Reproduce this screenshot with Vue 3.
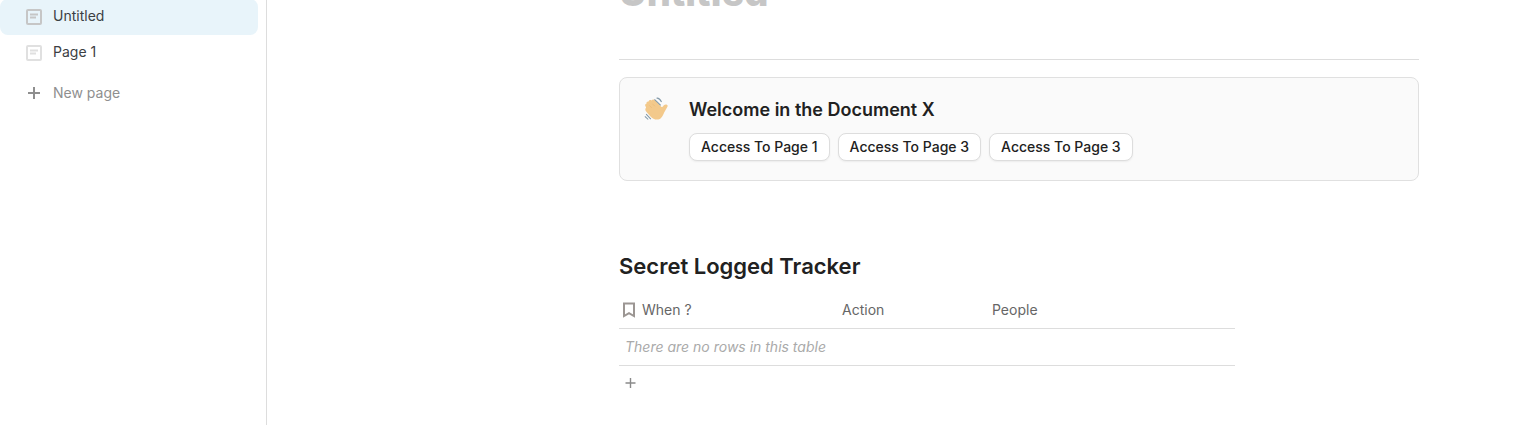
<script setup>
const pages = [
  { name: 'Untitled', active: true },
  { name: 'Page 1', active: false },
]
const links = ['Access To Page 1', 'Access To Page 3', 'Access To Page 3']
</script>

<template>
  <div class="app">
    <nav class="sidebar" aria-label="Pages">
      <a v-for="page in pages" :key="page.name" href="#" class="page" :class="{ active: page.active }">
        <svg class="page-icon" viewBox="0 0 16 16" fill="none" stroke="currentColor" stroke-width="2" aria-hidden="true">
          <rect x="1" y="1" width="14" height="14" rx="1" />
          <path d="M4 5.500h8M4 8.500h6" stroke-width="2" />
        </svg>
        <span class="page-name">{{ page.name }}</span>
      </a>
      <button type="button" class="new-page">
        <svg class="page-icon" viewBox="0 0 16 16" stroke="currentColor" stroke-width="2" aria-hidden="true">
          <path d="M8 2v12M2 8h12" />
        </svg>
        <span>New page</span>
      </button>
    </nav>

    <main class="content">
      <h1 class="title">Untitled</h1>
      <hr class="divider" />

      <section class="callout">
        <svg class="wave" viewBox="0 0 24 24" aria-hidden="true">
          <path
            fill="#f3c98b"
            d="M2.2 8.5C1.7 7.400 2.300 6.500 3.300 6.400C3.100 5 4.300 4.200 5.300 4.500C5.500 3.200 6.900 2.500 8 3.300C9.300 1.900 10.500 2 11.800 3.300L17.500 9.400C18.400 9.800 18.800 9.600 19.300 8.900C20 7.700 21 6.900 22.500 7.200C23.800 7.600 24 8.800 23.300 9.700L20.600 14.300C19.500 17 17.600 21.300 14.500 21.600C11.500 21.900 9.200 20.800 7 18.400L3.200 14.200C1.800 12.500 2 11 3 10.400Z"
          />
          <path fill="none" stroke="#e9b873" stroke-width=".6" d="M6 8l2.500 2.500M9 6.500l2.500 2.500" />
          <path
            fill="none"
            stroke="#8198a8"
            stroke-width="1"
            d="M11 2.200L17 8M13 1.200Q15.500 .4 17.800 4.800M3 16.500L7.500 21.200M1.800 18.500L5 21.600"
          />
        </svg>
        <div class="callout-body">
          <h2 class="callout-title">Welcome in the Document X</h2>
          <div class="actions">
            <button v-for="(label, i) in links" :key="i" type="button" class="action">{{ label }}</button>
          </div>
        </div>
      </section>

      <h2 class="tracker-title">Secret Logged Tracker</h2>
      <table class="tracker">
        <colgroup>
          <col class="col-when" />
          <col class="col-action" />
          <col />
        </colgroup>
        <thead>
          <tr>
            <th scope="col">
              <span class="key">
                <svg class="bookmark" viewBox="0 0 14 16" fill="none" stroke="currentColor" stroke-width="2" aria-hidden="true">
                  <path d="M2 1.500h10v12.500L7 11.200l-5 2.800z" />
                </svg>
                When ?
              </span>
            </th>
            <th scope="col">Action</th>
            <th scope="col">People</th>
          </tr>
        </thead>
        <tbody>
          <tr>
            <td colspan="3">There are no rows in this table</td>
          </tr>
        </tbody>
      </table>
      <button type="button" class="add-row" aria-label="Add row">
        <svg viewBox="0 0 12 12" stroke="currentColor" stroke-width="1.4" aria-hidden="true">
          <path d="M6.500 1v10M1.500 6h10" />
        </svg>
      </button>
    </main>
  </div>
</template>

<style>
body {
  margin: 0;
  background: #fff;
}
</style>

<style scoped>
.app {
  display: flex;
  min-height: 100vh;
  overflow: hidden;
  font-family: Inter, "Liberation Sans", sans-serif;
  font-size: 14px;
  line-height: 20px;
  color: #212121;
}

button {
  font: inherit;
  cursor: pointer;
}

.sidebar {
  box-sizing: border-box;
  flex: 0 0 267px;
  padding-right: 8px;
  border-right: 1px solid #ddd;
}

.page,
.new-page {
  display: flex;
  align-items: center;
  gap: 11px;
  box-sizing: border-box;
  width: 100%;
  height: 36px;
  padding: 0 26px;
  border: 0;
  border-radius: 8px;
  background: none;
  color: #3c4043;
  text-decoration: none;
}

.page {
  margin-top: -1px;
}

.page + .page {
  margin-top: 0;
}

.page.active {
  background: #e8f4fa;
}

.page-name {
  padding-bottom: 2px;
}

.page-icon {
  flex: none;
  width: 16px;
  height: 16px;
  color: #e0e0e0;
}

.active .page-icon {
  color: #c6c6c6;
}

.new-page {
  margin-top: 4px;
  color: #8f8f8f;
}

.new-page .page-icon {
  color: #8f8f8f;
}

.content {
  flex: 1;
  min-width: 0;
  padding: 0 103px 24px 352px;
}

.title {
  margin: -32px 0 0;
  font-size: 38px;
  line-height: 48px;
  font-weight: 800;
  color: #c6c6c6;
}

.divider {
  height: 1px;
  margin: 43px 0 17px;
  border: 0;
  background: #ddd;
}

.callout {
  display: flex;
  gap: 21px;
  padding: 19px 23px;
  border: 1px solid #e0e0e0;
  border-radius: 8px;
  background: #fafafa;
}

.wave {
  flex: none;
  width: 25px;
  height: 25px;
}

.callout-body {
  min-width: 0;
}

.callout-title {
  margin: 0 0 10px;
  font-size: 18px;
  line-height: 26px;
  font-weight: 600;
}

.actions {
  display: flex;
  flex-wrap: wrap;
  gap: 8px;
}

.action {
  padding: 3px 11px;
  border: 1px solid #ddd;
  border-radius: 8px;
  background: #fff;
  box-shadow: 0 1px 2px rgba(0, 0, 0, 0.06);
  color: #212121;
  font-weight: 500;
}

.tracker-title {
  margin: 70px 0 11px;
  font-size: 22px;
  line-height: 30px;
  font-weight: 600;
}

.tracker {
  width: 77%;
  border-collapse: collapse;
  table-layout: fixed;
}

.col-when {
  width: 217px;
}

.col-action {
  width: 150px;
}

.tracker th,
.tracker td {
  height: 36px;
  padding: 0 6px;
  border-bottom: 1px solid #ddd;
  text-align: left;
  font-weight: 400;
}

.tracker th {
  color: #666;
}

.tracker td {
  color: #aaa;
  font-style: oblique 10deg;
}

.key {
  display: flex;
  align-items: center;
  gap: 6px;
  margin-left: -3px;
}

.bookmark {
  width: 14px;
  height: 16px;
  color: #9c9693;
}

.add-row {
  display: flex;
  padding: 11px 5px;
  border: 0;
  background: none;
  color: #8a8a8a;
}

.add-row svg {
  width: 12px;
  height: 12px;
}
</style>
